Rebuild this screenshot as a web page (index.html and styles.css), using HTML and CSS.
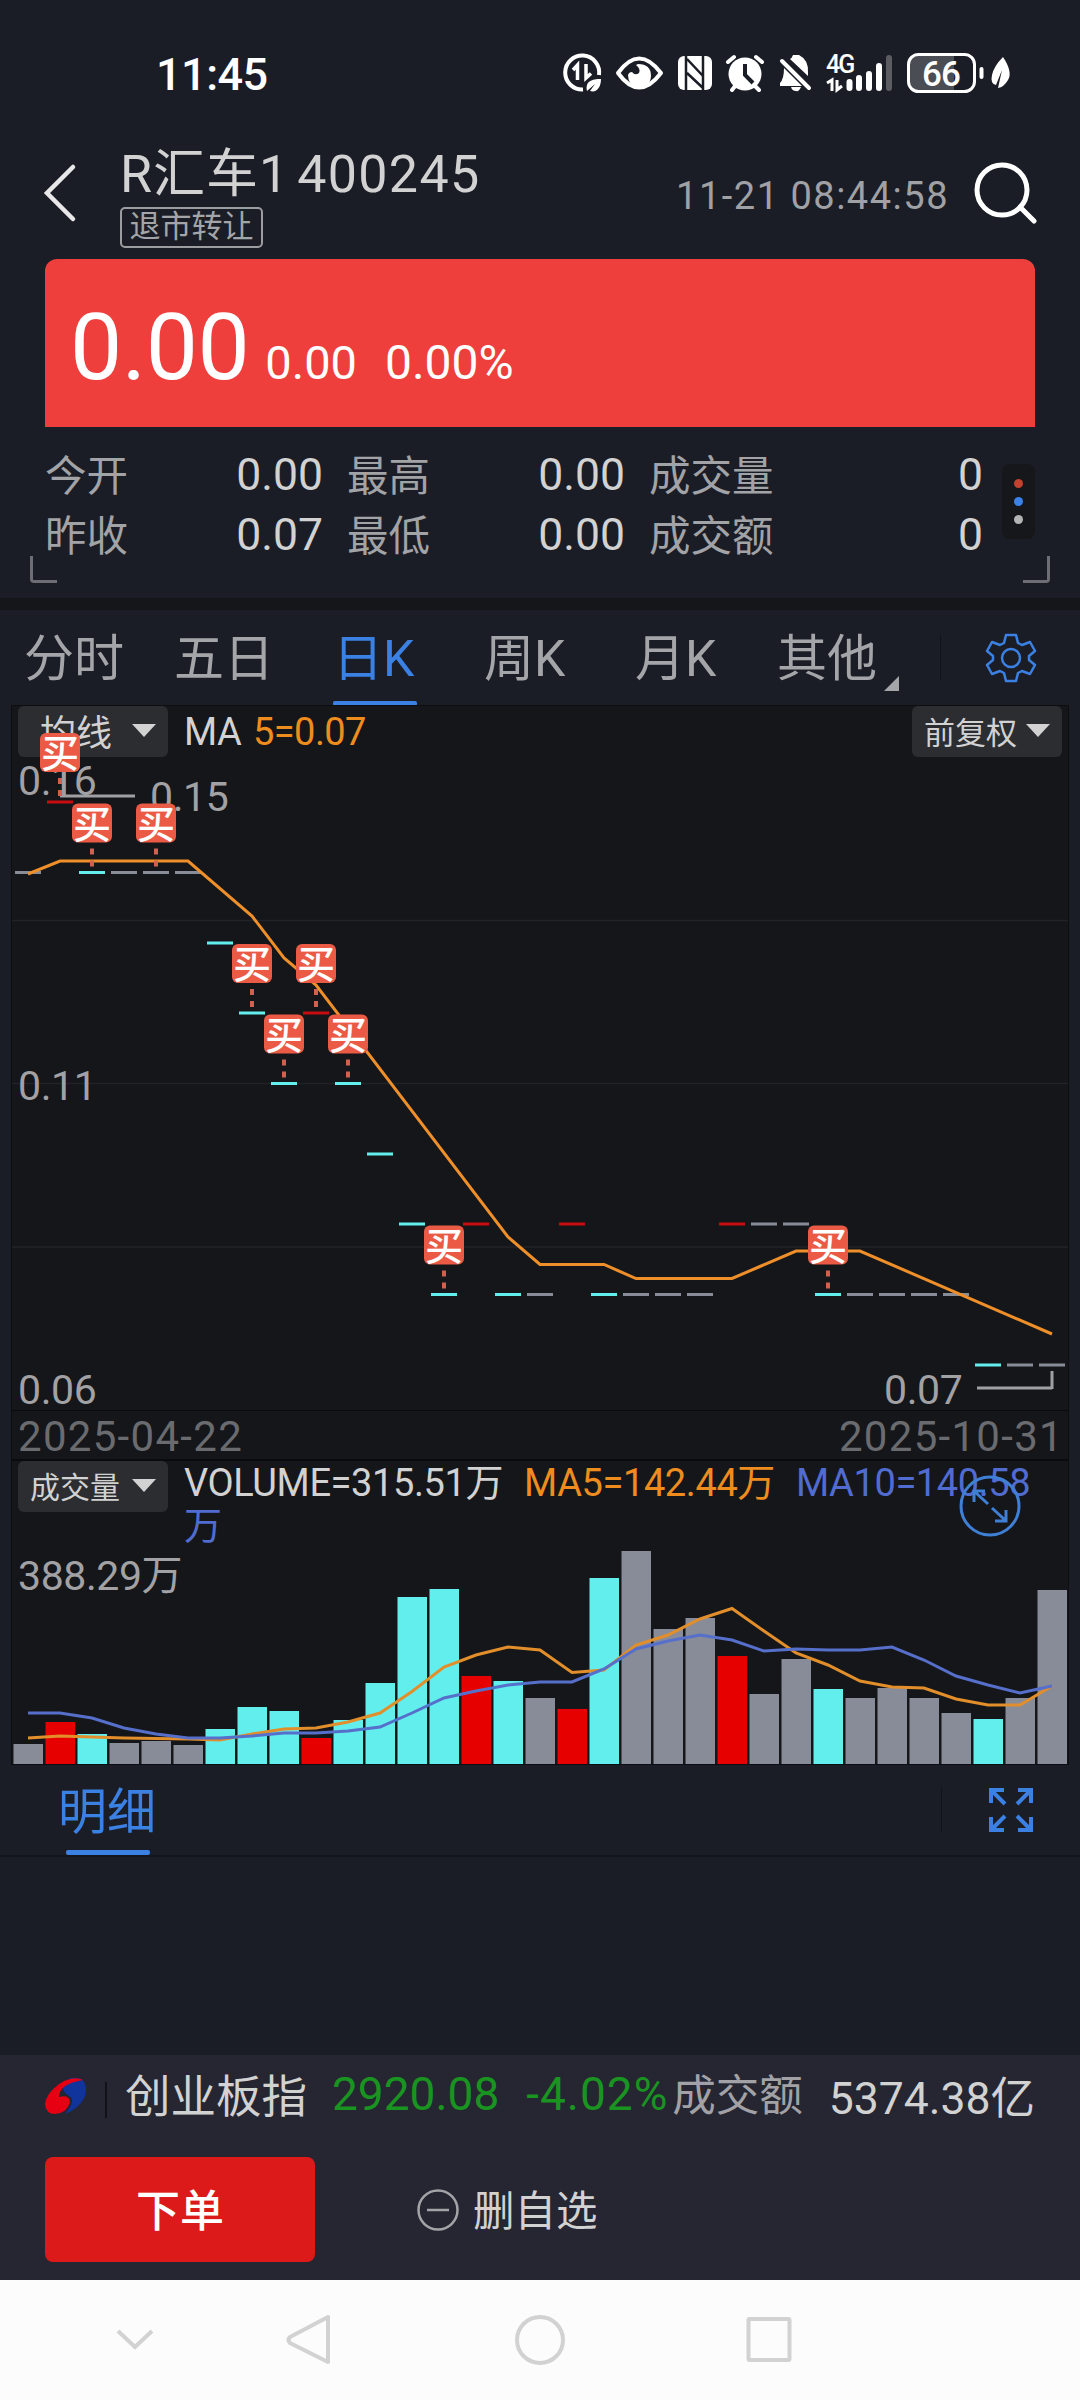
FILE: index.html
```html
<!DOCTYPE html>
<html lang="zh-CN">
<head>
    <meta charset="UTF-8">
    <meta name="viewport" content="width=device-width, initial-scale=1.0">
    <title>R汇车1 400245</title>
    <link rel="stylesheet" href="styles.css">
</head>
<body>
    <div class="status-bar">
        <span class="clock">11:45</span>
        <svg class="status-icons" width="460" height="50" viewBox="560 48 460 50">
            <!-- data saver -->
            <path d="M599 75A17 17 0 1 0 583 89.500" fill="none" stroke="#fff" stroke-width="4"/>
            <path d="M573 70L577.500 65V80M586 64V78L591 73.500" fill="none" stroke="#fff" stroke-width="3.500"/>
            <path d="M587 91C585 81 592 79 601 79C601 87 597 93 590 91L595 84Z" fill="#fff"/>
            <!-- eye -->
            <path d="M618 73Q639 44 661 73Q639 102 618 73Z" fill="none" stroke="#fff" stroke-width="4" stroke-linejoin="round"/>
            <path d="M638 64Q651 64 651 76Q650 88 639 88Q628 86 628 75Q629 72 632 72Q635 76 639 73Q641 69 636 65Z" fill="#fff"/>
            <!-- nfc -->
            <rect x="678" y="56" width="34" height="34" rx="6" fill="#fff"/>
            <path d="M686 56V90M703 56V90M687 59L703 76M687 73L703 88" stroke="#1b1d26" stroke-width="2.500" fill="none"/>
            <!-- alarm -->
            <circle cx="745" cy="74" r="16.500" fill="#fff"/>
            <path d="M728 62L734 57M762 62L756 57M732 90L736 85M759 90L754 85" stroke="#fff" stroke-width="4" stroke-linecap="round"/>
            <path d="M745 64V75L753 83" fill="none" stroke="#1b1d26" stroke-width="4"/>
            <!-- muted bell -->
            <path d="M790 59Q792 58 793 55H799Q809 60 808 73V76ZM784 68L802 86H780V83Q784 79 784 68ZM791 87H801Q799 92 796 91Q792 91 791 87Z" fill="#fff"/>
            <path d="M782 61L809 88" stroke="#fff" stroke-width="4" stroke-linecap="round"/>
            <!-- signal -->
            <text x="826" y="73" class="net">4G</text>
            <path d="M827 83L832 80V91M837 80V90L842 86" fill="none" stroke="#fff" stroke-width="3"/>
            <path d="M849.500 82V88M859 78V88M869 74V88M879 66V88" stroke="#fff" stroke-width="6" stroke-linecap="round"/>
            <path d="M889 58V88" stroke="#5b5c61" stroke-width="6" stroke-linecap="round"/>
            <!-- battery -->
            <path d="M917 56H954V90H917Q909 90 909 81V65Q909 56 917 56Z" fill="#4b4d54"/>
            <rect x="908.500" y="54.500" width="66" height="37" rx="10" fill="none" stroke="#fff" stroke-width="3"/>
            <text x="922" y="85.500" class="battery">66</text>
            <path d="M981.500 69V77" stroke="#fff" stroke-width="4" stroke-linecap="round"/>
            <path d="M1003 57Q1013 72 1008 80Q1004 87 998 88L1002 70L996 85Q990 84 992 75Q994 66 1003 57Z" fill="#fff"/>
        </svg>
    </div>

    <header>
        <svg class="back" width="34" height="60" viewBox="0 0 34 60"><path d="M30 4L4 30L30 56"/></svg>
        <div class="stock">
            <h1>R汇车1<span>400245</span></h1>
            <span class="tag">退市转让</span>
        </div>
        <time>11-21 08:44:58</time>
        <svg class="search" width="64" height="64" viewBox="0 0 64 64"><circle cx="29" cy="29" r="25"/><path d="M47 46L61 60"/></svg>
    </header>

    <section class="price">
        <span class="now">0.00</span>
        <span class="change">0.00</span>
        <span class="percent">0.00%</span>
    </section>

    <section class="quote">
        <dl>
            <div><dt>今开</dt><dd>0.00</dd></div>
            <div><dt>最高</dt><dd>0.00</dd></div>
            <div class="wide"><dt>成交量</dt><dd>0</dd></div>
            <div><dt>昨收</dt><dd>0.07</dd></div>
            <div><dt>最低</dt><dd>0.00</dd></div>
            <div class="wide"><dt>成交额</dt><dd>0</dd></div>
        </dl>
        <div class="more"><i class="red"></i><i class="blue"></i><i></i></div>
        <span class="corner left"></span>
        <span class="corner right"></span>
    </section>

    <nav class="tabs">
        <a>分时</a>
        <a>五日</a>
        <a class="active">日K</a>
        <a>周K</a>
        <a>月K</a>
        <a class="other">其他</a>
        <div class="settings">
            <svg width="52" height="52" viewBox="-26 -26 52 52">
                <path d="M-5 -23H5L7 -15L11 -13L19 -16L24 -7L18 -2V2L24 7L19 16L11 13L7 15L5 23H-5L-7 15L-11 13L-19 16L-24 7L-18 2V-2L-24 -7L-19 -16L-11 -13L-7 -15Z"/>
                <circle r="9"/>
            </svg>
        </div>
    </nav>

    <main class="chart">
        <div class="kline">
            <button class="pill">均线<i></i></button>
            <p class="legend"><span>MA</span><span class="ma5">5=0.07</span></p>
            <button class="pill small">前复权<i></i></button>
        </div>
        <div class="dates">
            <span>2025-04-22</span>
            <span>2025-10-31</span>
        </div>
        <div class="volume">
            <button class="pill small vol">成交量<i></i></button>
            <p class="legend"><span>VOLUME=315.51万</span><span class="ma5">MA5=142.44万</span><span class="ma10">MA10=140.58万</span></p>
        </div>
        <svg id="plot" width="1056" height="1058" viewBox="12 706 1056 1058"></svg>
    </main>

    <section class="detail">
        <a class="active">明细</a>
        <div class="settings">
            <svg width="44" height="44" viewBox="0 0 44 44" class="expand">
                <path d="M2 15V2H15M3 3L16 16M29 2H42V15M41 3L28 16M2 29V42H15M3 41L16 28M29 42H42V29M41 41L28 28"/>
            </svg>
        </div>
    </section>

    <footer>
        <div class="index">
            <svg class="logo" width="42" height="38" viewBox="0 0 42 38">
                <path d="M22 2Q40 -3 41 12Q41 28 20 37Q32 23 24 19Q17 15 18 9Q22 2 34 3Z" fill="#10349b"/>
                <path d="M38 3Q30 -1 19 4Q2 14 0 27Q1 37 10 37Q22 36 25 25Q24 17 14 20Q14 7 38 3Z" fill="#e60012"/>
            </svg>
            <span class="name">创业板指</span>
            <span class="value">2920.08</span>
            <span class="drop">-4.02%</span>
            <span class="label">成交额</span>
            <span class="amount">5374.38亿</span>
        </div>
        <div class="actions">
            <button class="order">下单</button>
            <button class="remove">
                <svg width="42" height="42" viewBox="0 0 42 42"><circle cx="21" cy="21" r="19.500"/><path d="M10 21H32"/></svg>
                <span>删自选</span>
            </button>
        </div>
    </footer>

    <div class="nav-bar">
        <svg width="1080" height="120" viewBox="0 2280 1080 120">
            <path d="M118 2331L135 2347L152 2331"/>
            <path d="M328 2317V2362L290 2343Q287 2340 290 2337Z" stroke-linejoin="round"/>
            <circle cx="540" cy="2340" r="23"/>
            <rect x="748.500" y="2319" width="41" height="41" rx="1"/>
        </svg>
    </div>

    <script>
        const plot = document.getElementById('plot');
        const step = 32;
        const colors = { g: '#888b98', r: '#e60000', c: '#63eeee' };
        const kinds = 'grcgggcccrccccrcgrcgggrggcggggcgg';

        // closing price row of every day
        const levels = [872.5, 802, 872.5, 872.5, 872.5, 872.5, 943, 1013, 1083.5, 1013, 1083.5, 1154, 1224, 1294.5, 1224, 1294.5, 1294.5,
            1224, 1294.5, 1294.5, 1294.5, 1294.5, 1224, 1224, 1224, 1294.5, 1294.5, 1294.5, 1294.5, 1294.5, 1365, 1365, 1365];
        const heights = [20, 42, 30, 21, 23, 19, 35, 57, 53, 26, 44, 81, 167, 175, 88, 83, 66, 55, 186, 213, 135, 146, 108, 70, 105, 75,
            66, 76, 66, 51, 45, 66, 174];
        const volMa5 = [1738, 1736, 1737, 1738, 1738.5, 1739, 1740, 1734, 1729, 1728, 1722, 1713, 1691.5, 1667, 1655, 1647, 1650, 1672.5,
            1670, 1645, 1635, 1619, 1608.5, 1631, 1653, 1665, 1681, 1687, 1688, 1699, 1705, 1705, 1686];
        const volMa10 = [1713, 1713, 1718, 1728, 1734, 1738, 1738, 1736, 1733, 1733, 1731, 1727, 1713, 1698, 1691, 1685, 1682, 1682, 1669,
            1649, 1641, 1635, 1640, 1651, 1649, 1650, 1650, 1647, 1660, 1676, 1685, 1693, 1686];
        const buys = [1, 2, 4, 7, 8, 9, 10, 13, 25];

        const centerX = i => 28 + i * step;
        const line = (list, color) => {
            const points = list.map((y, i) => `${centerX(i)},${y}`).join(' ');
            return `<polyline points="${points}" stroke="${color}" class="line"/>`;
        };

        let out = '';
        [920.5, 1083.5, 1247].forEach(y => {
            out += `<path d="M12 ${y}H1068" class="grid"/>`;
        });
        out += '<text x="18" y="794.5" class="axis">0.16</text>';
        out += '<text x="18" y="1099.5" class="axis">0.11</text>';
        out += '<text x="18" y="1403.5" class="axis">0.06</text>';
        out += '<text x="18" y="1590" class="axis">388.29万</text>';
        out += '<text x="150" y="811" class="axis">0.15</text>';
        out += '<text x="884" y="1403.5" class="axis">0.07</text>';
        out += '<path d="M64 772V796M60 796H135M977 1388H1052M1052 1371V1389" class="pointer"/>';

        levels.forEach((y, i) => {
            const color = kinds[i] === 'r' ? '#c80c10' : colors[kinds[i]];
            out += `<rect x="${centerX(i) - 13}" y="${y - 1.5}" width="26" height="3" fill="${color}"/>`;
        });
        out += '<polyline class="line" stroke="#ef8f2a" points="28,874 60,861 188,861 252,916 284,958 316,985 508,1237 540,1264.5 604,1264.5 636,1278.5 732,1278.5 796,1251 860,1251 1052,1334"/>';

        buys.forEach(i => {
            const x = centerX(i);
            const top = levels[i] - 69;
            out += `<path d="M${x} ${top + 45}v6m0 6v6" class="dash"/>`;
            out += `<rect x="${x - 20}" y="${top}" width="40" height="39" rx="6" fill="#eb5a45"/>`;
            out += `<text x="${x}" y="${top + 34}" class="buy">买</text>`;
        });

        heights.forEach((h, i) => {
            out += `<rect x="${centerX(i) - 14.5}" y="${1764 - h}" width="29.5" height="${h}" fill="${colors[kinds[i]]}"/>`;
        });
        out += line(volMa5, '#e28f2b');
        out += line(volMa10, '#566fca');

        out += '<circle cx="990" cy="1506" r="29" class="zoom"/>';
        out += '<path d="M974 1502V1491H985M975 1492L988 1504M1006 1510V1521H995M1005 1520L992 1508" class="zoom"/>';
        plot.innerHTML = out;
    </script>
</body>
</html>
```
FILE: styles.css
```css
* {
    box-sizing: border-box;
}
body {
    width: 1080px;
    height: 2400px;
    margin: 0;
    overflow: hidden;
    background-color: #1b1d26;
    color: #d2d2d2;
    font-family: Roboto, "Noto Sans CJK SC", sans-serif;
}
button {
    border: none;
    padding: 0;
    font-family: inherit;
    color: inherit;
}
svg {
    display: block;
}
.status-bar {
    height: 144px;
    padding: 48px 60px 0 156px;
    display: flex;
    justify-content: space-between;
    color: #fff;
}
.clock {
    font-size: 45px;
    font-weight: 500;
    line-height: 53px;
    letter-spacing: -0.5px;
}
.net {
    font-size: 25px;
    font-weight: 500;
    fill: #fff;
    letter-spacing: -2px;
}
.battery {
    font-size: 35px;
    font-weight: 500;
    fill: #fff;
    letter-spacing: -1px;
}
header {
    height: 115px;
    padding: 0 43px 0 43px;
    display: flex;
}
.back {
    margin-top: 19px;
    fill: none;
    stroke: #e8e8e8;
    stroke-width: 4.5;
    stroke-linecap: round;
}
.stock {
    margin-left: 43px;
    flex: 1;
}
h1 {
    margin: 0;
    font-size: 52px;
    font-weight: 400;
    line-height: 62px;
    letter-spacing: 1px;
}
h1 span {
    margin-left: 8px;
    letter-spacing: 1.300px;
}
.tag {
    display: block;
    width: 143px;
    height: 41px;
    margin-top: 1px;
    border: 2px solid #9c9da0;
    border-radius: 5px;
    color: #a4a5a8;
    font-size: 31px;
    line-height: 36px;
    text-align: center;
}
time {
    margin: 30px 24px 0 0;
    color: #a0a1a5;
    font-size: 38px;
    line-height: 44px;
    letter-spacing: 1.500px;
}
.search {
    margin-top: 17px;
    fill: none;
    stroke: #fff;
    stroke-width: 5;
    stroke-linecap: round;
}
.price {
    height: 168px;
    margin: 0 45px;
    padding: 0 25px;
    display: flex;
    align-items: baseline;
    background-color: #ee3f3d;
    border-radius: 12px 12px 0 0;
    color: #fff;
    line-height: 177px;
}
.now {
    font-size: 93px;
    letter-spacing: -0.5px;
}
.change {
    margin-left: 16px;
    font-size: 47px;
}
.percent {
    margin-left: 28px;
    font-size: 48px;
}
.quote {
    position: relative;
    height: 171px;
    padding: 18px 45px 0;
    display: flex;
    justify-content: space-between;
}
dl {
    width: 939px;
    margin: 0;
    display: grid;
    grid-template-columns: 278px 278px 334px;
    column-gap: 24px;
    grid-auto-rows: 60px;
}
dl div {
    display: flex;
    justify-content: space-between;
    align-items: center;
}
dt {
    padding-bottom: 5px;
    color: #a2a3a6;
    font-size: 41.500px;
}
dd {
    margin: 0;
    font-size: 44.500px;
}
.more {
    width: 33px;
    height: 75px;
    margin-top: 19px;
    display: flex;
    flex-direction: column;
    align-items: center;
    justify-content: center;
    gap: 9px;
    background-color: #15171a;
    border-radius: 8px;
}
.more i {
    width: 9px;
    height: 9px;
    border-radius: 50%;
    background-color: #b4b4b4;
}
.more .red {
    background-color: #c2412f;
}
.more .blue {
    background-color: #3b82e8;
}
.corner {
    position: absolute;
    top: 129px;
    width: 27px;
    height: 27px;
    border-bottom: 3px solid #6c6e73;
}
.corner.left {
    left: 30px;
    border-left: 3px solid #6c6e73;
    border-bottom-left-radius: 4px;
}
.corner.right {
    right: 30px;
    border-right: 3px solid #6c6e73;
    border-bottom-right-radius: 4px;
}
.tabs {
    height: 108px;
    padding-left: 24px;
    display: grid;
    grid-template-columns: 150px 159px 151px 151px 142px 163px 1fr;
    grid-template-rows: 96px;
    border-top: 12px solid #15161a;
    color: #a4a5a9;
    font-size: 50px;
    line-height: 98px;
}
.active {
    position: relative;
    color: #3b80e3;
}
.active::after {
    content: "";
    position: absolute;
    left: 0;
    bottom: 0;
    width: 84px;
    height: 5px;
    border-radius: 2px;
    background-color: #3b80e3;
}
.tabs .other::after {
    content: "";
    display: inline-block;
    margin-left: 7px;
    border-left: 15px solid transparent;
    border-bottom: 15px solid #a4a5a9;
    vertical-align: -15px;
}
.settings {
    height: 45px;
    padding-left: 44px;
    display: flex;
    align-items: center;
    border-left: 1px solid #111318;
}
.tabs .settings {
    margin-top: 25px;
}
.settings svg {
    fill: none;
    stroke: #3b80e3;
    stroke-width: 2.500;
    stroke-linejoin: round;
}
.settings .expand {
    margin-left: 3px;
    stroke-width: 4;
    stroke-linejoin: miter;
}
.chart {
    position: relative;
    height: 1058px;
    margin: 0 12px;
    background-color: #15161a;
    box-shadow: 0 0 0 1px #0d0e12;
}
#plot {
    position: absolute;
    top: 0;
    left: 0;
}
.kline {
    height: 704px;
    padding: 0 6px;
    display: flex;
    align-items: flex-start;
}
.pill {
    width: 150px;
    height: 51px;
    display: flex;
    align-items: center;
    justify-content: flex-end;
    padding: 0 12px 3px 0;
    flex-shrink: 0;
    background-color: #2c2d31;
    border-radius: 6px;
    font-size: 36px;
}
.pill i {
    margin-left: 20px;
    border: 12px solid transparent;
    border-top: 13px solid #d2d2d2;
    border-bottom: 0;
}
.pill.small {
    font-size: 31px;
}
.pill.small i {
    margin-left: 9px;
}
.pill.vol {
    font-size: 30px;
}
.pill.vol i {
    margin-left: 12px;
}
.legend {
    flex: 1;
    margin: 0;
    padding-left: 16px;
    font-size: 38px;
    line-height: 52px;
}
.legend span {
    margin-right: 21px;
}
.legend .ma5 {
    color: #ef8c1e;
}
.legend .ma10 {
    margin: 0;
    color: #516cd0;
}
.kline .legend span {
    margin-right: 12px;
    letter-spacing: -0.600px;
}
.dates {
    height: 51px;
    padding: 0 4px 0 6px;
    display: flex;
    justify-content: space-between;
    border-top: 1px solid #0b0b0e;
    border-bottom: 2px solid #0b0b0e;
    color: #6a6b6f;
    font-size: 42px;
    line-height: 52px;
    letter-spacing: 1.300px;
}
.volume {
    padding: 0 6px;
    display: flex;
}
.volume .legend {
    padding-top: 1px;
    line-height: 43px;
    letter-spacing: -0.400px;
}
.grid {
    stroke: #222328;
    stroke-width: 1.500;
}
.axis {
    font-size: 41px;
    fill: #a2a2a5;
    letter-spacing: -0.400px;
}
.pointer {
    fill: none;
    stroke: #a0a0a3;
    stroke-width: 3;
}
.line {
    fill: none;
    stroke-width: 3;
}
.dash {
    stroke: #d2604f;
    stroke-width: 4;
}
.buy {
    fill: #fff;
    font-size: 38px;
    font-weight: 500;
    text-anchor: middle;
}
.zoom {
    fill: none;
    stroke: #3f7fd6;
    stroke-width: 3;
}
.detail {
    height: 93px;
    padding-left: 66px;
    display: flex;
    justify-content: space-between;
    border-bottom: 2px solid #14151b;
    font-size: 49px;
    line-height: 97px;
}
.detail .active {
    height: 91px;
    text-indent: -8px;
}
.detail .settings {
    width: 139px;
    margin-top: 23px;
}
footer {
    height: 225px;
    margin-top: 198px;
    padding: 0 45px;
    background-color: #252632;
}
.index {
    height: 102px;
    padding-bottom: 20px;
    display: flex;
    align-items: center;
    white-space: nowrap;
    font-size: 46px;
}
.index span {
    padding-bottom: 4px;
}
.index .name {
    margin-left: 18px;
    padding-left: 20px;
    padding-bottom: 6px;
    background: linear-gradient(#111219, #111219) 0 60% / 2px 36px no-repeat;
    font-size: 45.500px;
}
.value {
    margin-left: 25px;
    color: #1a9420;
}
.drop {
    margin-left: 27px;
    color: #1a9420;
    letter-spacing: 1px;
}
.index .label {
    margin-left: 4px;
    padding-bottom: 7px;
    color: #a2a2a6;
    font-size: 43.500px;
}
.amount {
    margin-left: auto;
    font-size: 44.500px;
}
.actions {
    display: flex;
    align-items: center;
}
.order {
    width: 270px;
    height: 105px;
    padding-bottom: 4px;
    background-color: #db1a19;
    border-radius: 8px;
    color: #fff;
    font-size: 44px;
    font-weight: 500;
}
.remove {
    margin-left: 102px;
    display: flex;
    align-items: center;
    gap: 14px;
    background: none;
    font-size: 41.500px;
}
.remove span {
    padding-bottom: 3px;
}
.remove svg {
    fill: none;
    stroke: #a4a4a8;
    stroke-width: 2.500;
}
.nav-bar {
    background-color: #fcfcfc;
    height: 120px;
}
.nav-bar svg {
    fill: none;
    stroke: #d2d2d2;
    stroke-width: 4;
}
```
